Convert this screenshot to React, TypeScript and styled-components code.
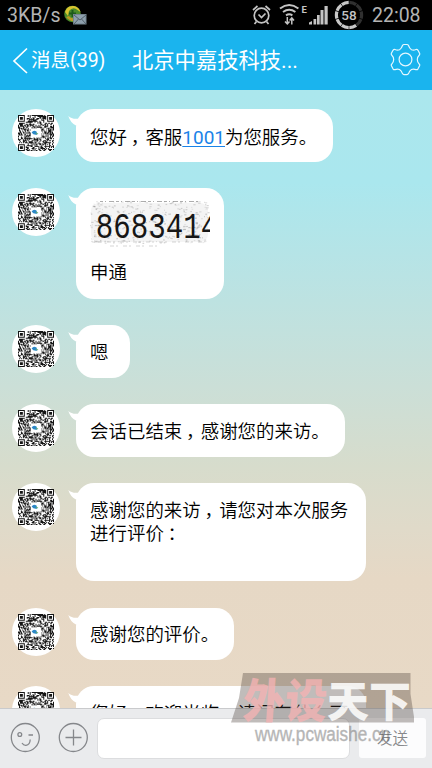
import React from "react";
import styled, { createGlobalStyle } from "styled-components";

const GlobalStyle = createGlobalStyle`
  * { box-sizing: border-box; }
  body { margin: 0; background: #000; }
`;

const Screen = styled.div`
  position: relative;
  display: flex;
  flex-direction: column;
  width: 432px;
  height: 768px;
  overflow: hidden;
  font-family: Roboto, "Noto Sans CJK SC", sans-serif;
  font-weight: 350;
  color: #000;
`;

const StatusBar = styled.div`
  display: flex;
  align-items: center;
  flex: none;
  height: 30px;
  padding: 0 12px 0 7px;
  background: #000;
  color: #b4b4b4;
  font-size: 19.5px;
  font-weight: 400;
  line-height: 31px;
`;

const Speed = styled.span`
  width: 57px;
  white-space: nowrap;
`;

const Clock = styled.span`
  width: 48px;
  margin-left: 8px;
  font-size: 19.5px;
  text-align: right;
  white-space: nowrap;
`;

const StatusIcons = styled.div`
  display: flex;
  margin-left: auto;
`;

const Header = styled.header`
  display: flex;
  align-items: center;
  flex: none;
  height: 60px;
  padding: 0 9px 0 12px;
  background: #1ab4ee;
  color: #fff;
`;

const Back = styled.div`
  display: flex;
  align-items: center;
  gap: 3px;
  width: 120px;
  padding-top: 1px;
  font-size: 19.5px;
  font-weight: 400;
  line-height: 60px;
  white-space: nowrap;
`;

const Title = styled.h1`
  flex: 1;
  margin: 0;
  padding-top: 1px;
  font-size: 21.3px;
  font-weight: 400;
  line-height: 60px;
`;

const Messages = styled.main`
  display: flex;
  flex-direction: column;
  flex: 1;
  gap: 26.45px;
  min-height: 0;
  padding-top: 19.2px;
  overflow: hidden;
  background: linear-gradient(#abe7ed 0%, #aae7ee 15%, #b9e3e4 30%, #cbdfd7 48%, #d7dccc 61%, #e0dac9 71%, #e6d8c5 79%, #e8d9c6 100%);
`;

const Row = styled.div`
  display: flex;
  align-items: flex-start;
  flex: none;
  gap: 15.7px;
  padding-left: 12px;
`;

const Avatar = styled.div`
  display: flex;
  justify-content: center;
  align-items: center;
  width: 48px;
  height: 48px;
  border-radius: 50%;
  background: #fff;
`;

const Bubble = styled.div<{ $w: number; $h?: number }>`
  position: relative;
  width: ${(p) => p.$w}px;
  height: ${(p) => p.$h ?? 52.4}px;
  padding: 16.4px 0 0 14.4px;
  border-radius: 18px;
  background: #fff;
  font-size: 18.46px;
  line-height: 23.5px;
  white-space: nowrap;
`;

const Tail = styled.svg`
  position: absolute;
  left: -8px;
  top: 7px;
`;

const Mark = styled.span`
  display: inline-block;
  width: 1em;
  text-indent: 0.2em;
`;

const Link = styled.a`
  color: #1a83e8;
  font-size: 19px;
  font-weight: 400;
  text-decoration: underline;
  text-decoration-thickness: 1px;
  text-underline-offset: 2px;
`;

const Scan = styled.svg`
  display: block;
  margin: -4px 0 14px;
`;

const InputBar = styled.footer`
  display: flex;
  align-items: flex-start;
  flex: none;
  height: 60px;
  padding: 9px 6px 0 10px;
  border-top: 1px solid #c9cacc;
  background: #eaebed;
`;

const Tool = styled.div`
  width: 48px;
  height: 40px;
  padding-top: 4px;
`;

const Field = styled.div`
  width: 253px;
  height: 41px;
  margin-left: -9px;
  border: 1px solid #dcdddf;
  border-radius: 7px;
  background: #fff;
`;

const Send = styled.div`
  width: 67px;
  height: 40px;
  margin-left: 9px;
  border-radius: 3px;
  background: #fcfcfd;
  color: #87888b;
  font-size: 15.6px;
  line-height: 43px;
  text-align: center;
`;

const Watermark = styled.svg`
  position: absolute;
  left: 226px;
  top: 666px;
`;

function random(seed: number) {
  let s = seed;
  return () => {
    s = (s * 1103515245 + 12345) % 2147483648;
    return s / 2147483648;
  };
}

const QR = 37;
const qrPath = (() => {
  const next = random(58);
  const corners = [[0, 0], [QR - 7, 0], [0, QR - 7]];
  let d = "";
  for (let y = 0; y < QR; y++) {
    for (let x = 0; x < QR; x++) {
      let on = next() < 0.54;
      for (const [cx, cy] of corners) {
        const r = Math.max(Math.abs(x - cx - 3), Math.abs(y - cy - 3));
        if (r <= 4) on = r === 3 || r <= 1;
      }
      const a = Math.max(Math.abs(x - 30), Math.abs(y - 30));
      if (a <= 2) on = a !== 1;
      if (x >= 13 && x <= 23 && y >= 14 && y <= 22) on = false;
      if (on) d += `M${x} ${y}h1v1h-1z`;
    }
  }
  return d;
})();

const QrAvatar = () => (
  <Avatar>
    <svg width="36" height="36" viewBox="0 0 37 37">
      <path d={qrPath} fill="#151515" />
      <path d="M14 18q2-3 5-1l1 3q-4 1-6-2z" fill="#2b87c8" />
      <path d="M18 18l3 1-2 1z" fill="#63ad72" />
    </svg>
  </Avatar>
);

const specks = (() => {
  const next = random(91);
  return Array.from({ length: 420 }, () => {
    const x = next() * 118;
    const y = 1 + next() * 42;
    const w = 0.8 + next() * 1.8;
    const o = 0.04 + next() * 0.2;
    return { x, y, w, o };
  });
})();

const ScanPicture = () => (
  <Scan width="120" height="48" viewBox="0 0 120 48">
    <rect x="1" y="3" width="117" height="39" rx="8" fill="#f4f4f4" />
    {specks.map((s, i) => (
      <rect key={i} x={s.x} y={s.y} width={s.w} height="1.2" fill="#333" opacity={s.o} />
    ))}
    <path d="M10 1.5h98" stroke="#777" strokeWidth="1" strokeDasharray="3 2 1 3 5 2" opacity=".6" />
    <path d="M4 42h110M20 46h50" stroke="#999" strokeWidth="1" strokeDasharray="4 2 2 5" opacity=".4" />
    <g transform="translate(5.8 37.6) scale(.81 1.03)">
      <text fontFamily="Liberation Mono, monospace" fontSize="36" fill="#161616">8683414</text>
    </g>
  </Scan>
);

const Message = ({ w, h, children }: { w: number; h?: number; children: React.ReactNode }) => (
  <Row>
    <QrAvatar />
    <Bubble $w={w} $h={h}>
      <Tail width="18" height="14" viewBox="0 0 18 14">
        <path d="M.3 0Q4 3.600 11 2.600L18 8L8 9.500Q2.500 7 .3 0z" fill="#fff" />
      </Tail>
      {children}
    </Bubble>
  </Row>
);

const batteryTicks = Array.from({ length: 10 }, (_, i) => i);

export default function App() {
  return (
    <Screen>
      <GlobalStyle />
      <StatusBar>
        <Speed>3KB/s</Speed>
        <svg width="23" height="22" viewBox="0 0 23 22">
          <circle cx="8.5" cy="10" r="8.3" fill="#4b8a2a" />
          <path d="M1 8Q3 1 10 2q5 1 6.500 6l-3-2Q9 2 5 7L4 12z" fill="#d8c32f" />
          <path d="M2 13q4 5 9 4v-3Q7 15 5 12z" fill="#b99b22" />
          <path d="M8.500 6v7M5 9.500h7" stroke="#1e5a1b" strokeWidth="2" />
          <rect x="9.500" y="10.500" width="12.500" height="9.500" fill="#8ea0ad" stroke="#73838e" />
          <path d="M10 11l6 5 6-5M10 20l4.500-5M22 20l-4.500-5" fill="none" stroke="#52616b" />
        </svg>
        <StatusIcons>
          <svg width="116" height="30" viewBox="248 0 116 30">
            <g fill="none" stroke="#c4c4c4" strokeWidth="1.7">
              <circle cx="261.500" cy="15.500" r="7.300" />
              <path d="M253 10l4.500-4M265.500 6l4.500 4M256.500 21.500l-2 2.500M266.500 21.500l2 2.500" />
              <path d="M258.500 14.500l3 3 4-4" />
              <path d="M280 8.500q9.200-7 18.400 0M283 12q6.200-4.500 12.400 0M286 15.300q3.200-2 6.400 0" strokeWidth="2" />
              <path d="M287.300 17v7M285 21.500l2.300 2.500 2.200-2.500M291.800 24.500V18M289.600 20.500l2.200-2.500 2.200 2.500" strokeWidth="1.500" />
            </g>
            <text x="301.500" y="13" fill="#c4c4c4" fontFamily="Roboto" fontSize="9.500" fontWeight="700">E</text>
            <path d="M309 24.500v-2l3-1.500v3.500zM313.500 24.500V19h2.700v5.500zM317 24.500V15h2.700v9.500zM320.500 24.500V10h3v14.500zM324.500 24.500V6h3.200v18.500z" fill="#c4c4c4" />
            {batteryTicks.map((i) => (
              <circle
                key={i}
                cx="349"
                cy="15"
                r="12.600"
                fill="none"
                stroke={i < 4 ? "#303030" : "#c8c8c8"}
                strokeWidth="3.200"
                pathLength="100"
                strokeDasharray="9.200 90.800"
                strokeDashoffset={24.600 - i * 10}
              />
            ))}
            <text x="349" y="19.800" textAnchor="middle" fill="#c4c4c4" fontFamily="Roboto" fontSize="13.500" fontWeight="500">58</text>
          </svg>
        </StatusIcons>
        <Clock>22:08</Clock>
      </StatusBar>

      <Header>
        <Back>
          <svg width="16" height="28" viewBox="0 0 16 28">
            <path d="M15 1.500L2 14 15 26" fill="none" stroke="#fff" strokeWidth="1.700" />
          </svg>
          消息(39)
        </Back>
        <Title>北京中嘉技科技...</Title>
        <svg width="34" height="34" viewBox="0 0 34 34" fill="none" stroke="#e5f7ff" strokeWidth="1.200">
          <circle cx="16.500" cy="16.500" r="6.400" />
          <path d="M13.500 2.500Q14 1.500 15 1.500h3Q19 1.500 19.500 2.500Q20.500 5.500 22.500 6.700Q24.500 7.500 27 6.500Q28.200 6.100 29 7.300L30.700 10.500Q31 11.500 30.200 12.200Q28.300 14 28.300 16.500T30.200 21Q31 21.700 30.700 22.600L29 25.800Q28.200 27 27 26.600Q24.500 25.600 22.500 26.500Q20.500 27.600 19.500 30.600Q19 31.600 18 31.600h-3Q14 31.600 13.500 30.600Q12.500 27.600 10.500 26.500Q8.500 25.600 6 26.600Q4.800 27 4 25.800L2.300 22.600Q2 21.700 2.800 21Q4.700 19 4.700 16.500T2.800 12.200Q2 11.500 2.300 10.500L4 7.300Q4.800 6.100 6 6.500Q8.500 7.500 10.500 6.700Q12.500 5.500 13.500 2.500z" />
        </svg>
      </Header>

      <Messages>
        <Message w={257.500}>您好<Mark>，</Mark>客服<Link>1001</Link>为您服务。</Message>
        <Message w={148.500} h={111}>
          <ScanPicture />
          申通
        </Message>
        <Message w={54}>嗯</Message>
        <Message w={269.500}>会话已结束<Mark>，</Mark>感谢您的来访。</Message>
        <Message w={290.500} h={98}>
          感谢您的来访<Mark>，</Mark>请您对本次服务
          <br />
          进行评价<Mark>：</Mark>
        </Message>
        <Message w={158.500}>感谢您的评价。</Message>
        <Message w={290.500}>您好<Mark>，</Mark>欢迎光临<Mark>，</Mark>请问有什么可</Message>
      </Messages>

      <InputBar>
        <Tool>
          <svg width="31" height="31" viewBox="0 0 31 31" fill="none" stroke="#85878b" strokeWidth="1.300">
            <circle cx="15.300" cy="15.500" r="14" />
            <circle cx="9.800" cy="12.500" r="1.900" />
            <path d="M18.500 13h4.500M12 21q1.500 2.500 4 2.300Q20 22.800 20.200 17.500" />
          </svg>
        </Tool>
        <Tool>
          <svg width="31" height="31" viewBox="0 0 31 31" fill="none" stroke="#85878b" strokeWidth="1.300">
            <circle cx="15.300" cy="15.500" r="14" />
            <path d="M7.500 15.500h16M15.500 7.500v16" />
          </svg>
        </Tool>
        <Field />
        <Send>发送</Send>
      </InputBar>

      <Watermark width="200" height="86" viewBox="226 666 200 86">
        <path d="M243 673H410.500V694L414 717V722.500H231L239 698z" fill="#453a35" opacity=".34" />
        <g fontFamily="Noto Sans CJK SC" fontWeight="900">
          <g transform="translate(242 717.500) skewX(-4) scale(1 1.120)" fill="#f4b3b3" opacity=".8">
            <text fontSize="42" textLength="84" lengthAdjust="spacingAndGlyphs">外设</text>
          </g>
          <text x="327" y="716.500" fontSize="42" fill="#fff" opacity=".85" textLength="84" lengthAdjust="spacingAndGlyphs">天下</text>
        </g>
        <text x="255" y="741" fontFamily="Liberation Sans Narrow, Liberation Sans" fontSize="20" fill="#5c5c5c" stroke="#5c5c5c" strokeWidth=".4" opacity=".45" textLength="135" lengthAdjust="spacingAndGlyphs">www.pcwaishe.cn</text>
      </Watermark>
    </Screen>
  );
}
